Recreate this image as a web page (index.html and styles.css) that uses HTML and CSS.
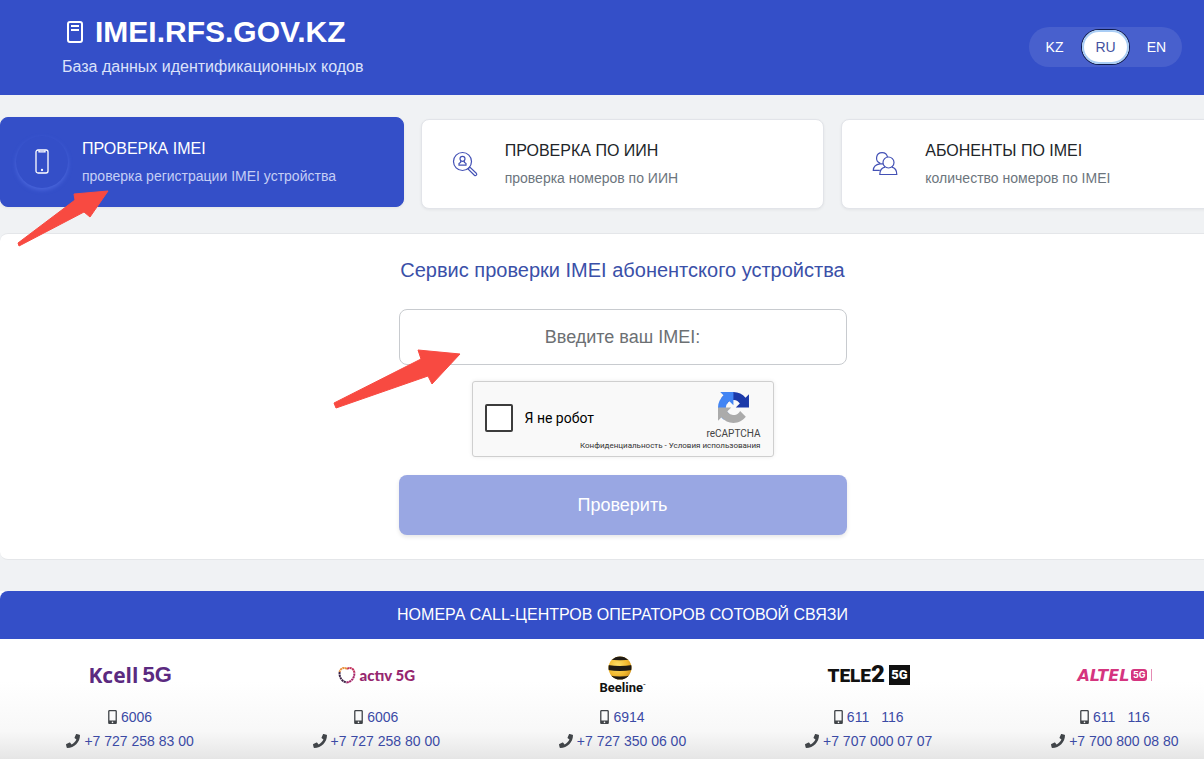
FILE: index.html
```
<!DOCTYPE html>
<html lang="ru">
<head>
  <meta charset="UTF-8">
  <title>IMEI.RFS.GOV.KZ</title>
  <meta name="viewport" content="width=device-width, initial-scale=1.0">
  <link rel="stylesheet" href="styles.css">
</head>
<body>
<svg class="sprite" aria-hidden="true">
  <symbol id="mobile" viewBox="0 0 320 512">
    <path d="M272 0H48C21.5 0 0 21.5 0 48v416c0 26.5 21.5 48 48 48h224c26.5 0 48-21.5 48-48V48c0-26.5-21.5-48-48-48zM160 480c-17.7 0-32-14.3-32-32s14.3-32 32-32 32 14.3 32 32-14.3 32-32 32zm112-108c0 6.6-5.4 12-12 12H60c-6.6 0-12-5.4-12-12V60c0-6.6 5.4-12 12-12h200c6.6 0 12 5.4 12 12v312z"/>
  </symbol>
  <symbol id="phone" viewBox="0 0 512 512">
    <path d="M493.4 24.6l-104-24c-11.3-2.6-22.9 3.3-27.5 13.9l-48 112c-4.2 9.8-1.4 21.3 6.9 28l60.6 49.6c-36 76.7-98.9 140.5-177.2 177.2l-49.6-60.6c-6.8-8.3-18.2-11.1-28-6.9l-112 48C3.9 366.5-2 378.1.6 389.4l24 104C27.1 504.2 36.7 512 48 512c256.1 0 464-207.5 464-464 0-11.2-7.7-20.9-18.6-23.4z"/>
  </symbol>
</svg>

<header class="header">
  <div class="brand">
    <h1>
      <svg class="brand-icon" viewBox="0 0 16 22" fill="none" stroke="currentColor" stroke-width="2">
        <rect x="1" y="1" width="14" height="20" rx="2"/>
        <path d="M4 5h8M4 9h8"/>
      </svg>
      IMEI.RFS.GOV.KZ
    </h1>
    <p>База данных идентификационных кодов</p>
  </div>
  <nav class="lang">
    <a href="#kz">KZ</a>
    <a href="#ru" class="active">RU</a>
    <a href="#en">EN</a>
  </nav>
</header>

<main class="page">
  <nav class="tabs">
    <a href="#imei" class="tab active">
      <span class="tab-icon">
        <svg width="14" height="26" viewBox="0 0 14 26" fill="none" stroke="currentColor" stroke-width="1.3">
          <rect x="1" y="1" width="12" height="23" rx="2"/>
          <path d="M4 1.5v1.3h6V1.5"/>
          <circle cx="7" cy="21" r=".5"/>
        </svg>
      </span>
      <span class="tab-text"><b>ПРОВЕРКА IMEI</b><small>проверка регистрации IMEI устройства</small></span>
    </a>
    <a href="#iin" class="tab">
      <span class="tab-icon">
        <svg width="26" height="26" viewBox="0 0 26 26" fill="none" stroke="currentColor" stroke-width="1.2">
          <circle cx="10.5" cy="10.5" r="9"/>
          <circle cx="10.5" cy="7.8" r="2.5"/>
          <path d="M8.7 9.5v1.7L7 12.5v1.7h7v-1.7l-1.7-1.3V9.500"/>
          <path d="M16 18l1.8-1.9 6.5 6.2c1.3 1.3-.6 3.1-1.9 1.9z"/>
        </svg>
      </span>
      <span class="tab-text"><b>ПРОВЕРКА ПО ИИН</b><small>проверка номеров по ИИН</small></span>
    </a>
    <a href="#numbers" class="tab">
      <span class="tab-icon">
        <svg width="26" height="26" viewBox="0 0 26 26" fill="none" stroke="currentColor" stroke-width="1.2">
          <path d="M15.5 6.200A5.5 5.5 0 1 0 8.300 12.300M8 12.800c-4 .5-6.5 2.700-6.700 6.500h6.500M8 12.800h3"/>
          <circle cx="16.5" cy="11.5" r="5.5"/>
          <path d="M13 16.200c-3.300.7-5.200 3.300-5.200 7.300h17c0-4-2-6.600-5-7.300"/>
        </svg>
      </span>
      <span class="tab-text"><b>АБОНЕНТЫ ПО IMEI</b><small>количество номеров по IMEI</small></span>
    </a>
  </nav>

  <section class="panel">
    <h2>Сервис проверки IMEI абонентского устройства</h2>
    <form class="form">
      <input class="imei" type="text" placeholder="Введите ваш IMEI:" aria-label="Введите ваш IMEI">
      <div class="captcha">
        <label class="robot"><input type="checkbox"> Я не робот</label>
        <div class="captcha-logo">
          <svg width="31" height="31" viewBox="0 0 64 64">
            <path fill="#1c3aa9" d="M64 31.955l-.033-1.37V4.687l-7.16 7.16C50.948 4.674 42.033.093 32.05.093c-10.4 0-19.622 4.96-25.458 12.64l11.736 11.86a15.55 15.55 0 0 1 4.754-5.334c2.05-1.6 4.952-2.906 8.968-2.906.485 0 .86.057 1.135.163 4.976.393 9.288 3.14 11.828 7.124l-8.307 8.307L64 31.953"/>
            <path fill="#4285f4" d="M31.862.094l-1.37.033H4.594l7.16 7.16C4.58 13.147 0 22.06 0 32.046c0 10.4 4.96 19.622 12.64 25.458L24.5 45.768a15.55 15.55 0 0 1-5.334-4.754c-1.6-2.05-2.906-4.952-2.906-8.968 0-.485.057-.86.163-1.135.393-4.976 3.14-9.288 7.124-11.828l8.307 8.307L31.86.095"/>
            <path fill="#ababab" d="M.001 32.045l.033 1.37v25.898l7.16-7.16c5.86 7.173 14.774 11.754 24.76 11.754 10.4 0 19.622-4.96 25.458-12.64l-11.736-11.86a15.55 15.55 0 0 1-4.754 5.334c-2.05 1.6-4.952 2.906-8.968 2.906-.485 0-.86-.057-1.135-.163-4.976-.393-9.288-3.14-11.828-7.124l8.307-8.307c-10.522.04-22.4.066-27.295-.005"/>
          </svg>
          <span>reCAPTCHA</span>
        </div>
        <p class="captcha-links"><a href="#privacy">Конфиденциальность</a> - <a href="#terms">Условия использования</a></p>
      </div>
      <button class="submit" type="button">Проверить</button>
    </form>
  </section>

  <section class="operators">
    <h3>НОМЕРА CALL-ЦЕНТРОВ ОПЕРАТОРОВ СОТОВОЙ СВЯЗИ</h3>
    <div class="operator-list">
      <div class="operator">
        <div class="logo kcell"><span>Kcell</span><b>5G</b></div>
        <p><svg class="i-mobile"><use href="#mobile"/></svg><a href="tel:6006">6006</a></p>
        <p><svg class="i-phone"><use href="#phone"/></svg><a href="tel:+77272588300">+7 727 258 83 00</a></p>
      </div>
      <div class="operator">
        <div class="logo activ">
          <svg width="18" height="18" viewBox="0 0 18 18" fill="none" stroke-width="2" stroke-dasharray="2.2 .5">
            <path stroke="#c2305c" d="M9 3c3-2.500 7-.5 7.300 3.500"/>
            <path stroke="#e8903c" d="M9 3C6 .5 2.200 2.500 1.700 6"/>
            <path stroke="#3d2347" d="M1.700 6C.8 10 3.500 15.500 8.500 16.500"/>
            <path stroke="#a52468" d="M8.500 16.500c5-.5 8.300-5 7.800-10"/>
          </svg>
          <span>actıv 5G</span>
        </div>
        <p><svg class="i-mobile"><use href="#mobile"/></svg><a href="tel:6006">6006</a></p>
        <p><svg class="i-phone"><use href="#phone"/></svg><a href="tel:+77272588000">+7 727 258 80 00</a></p>
      </div>
      <div class="operator">
        <div class="logo beeline">
          <svg width="24" height="24" viewBox="0 0 24 24">
            <defs>
              <radialGradient id="bee" cx=".4" cy=".4" r=".7">
                <stop offset="0" stop-color="#ffe169"/>
                <stop offset=".6" stop-color="#f2b82d"/>
                <stop offset="1" stop-color="#c98a16"/>
              </radialGradient>
              <clipPath id="ball"><circle cx="12" cy="12" r="11.500"/></clipPath>
            </defs>
            <g clip-path="url(#ball)">
              <rect width="24" height="24" fill="url(#bee)"/>
              <path fill="#1f1a14" d="M0 0h24v3.500Q12 5 0 3.500zM0 9q12 2 24 0v5q-12 2-24 0zM0 19q12 3 24 0v5H0z"/>
            </g>
          </svg>
          <span>Beeline<sup>™</sup></span>
        </div>
        <p><svg class="i-mobile"><use href="#mobile"/></svg><a href="tel:6914">6914</a></p>
        <p><svg class="i-phone"><use href="#phone"/></svg><a href="tel:+77273500600">+7 727 350 06 00</a></p>
      </div>
      <div class="operator">
        <div class="logo tele2"><span>TELE<big>2</big></span><b>5G</b></div>
        <p><svg class="i-mobile"><use href="#mobile"/></svg><a href="tel:611">611</a><a class="second" href="tel:116">116</a></p>
        <p><svg class="i-phone"><use href="#phone"/></svg><a href="tel:+77070000707">+7 707 000 07 07</a></p>
      </div>
      <div class="operator">
        <div class="logo altel"><span>ALTEL</span><b>5G</b></div>
        <p><svg class="i-mobile"><use href="#mobile"/></svg><a href="tel:611">611</a><a class="second" href="tel:116">116</a></p>
        <p><svg class="i-phone"><use href="#phone"/></svg><a href="tel:+77008000880">+7 700 800 08 80</a></p>
      </div>
    </div>
  </section>
</main>

<svg class="arrow arrow-tab" width="94" height="60" viewBox="0 0 94 60">
  <path d="M1 55L58 12l-1-6 34-3-18 26-6-5L2 58z"/>
</svg>
<svg class="arrow arrow-input" width="130" height="64" viewBox="0 0 130 64">
  <path d="M1 57l87-44-3-9 42 4-28 30-4-8L3 62z"/>
</svg>
</body>
</html>
```
FILE: styles.css
```
* { box-sizing: border-box; margin: 0; padding: 0; }
body {
  position: relative;
  min-height: 100vh;
  font-family: "Liberation Sans", Arial, sans-serif;
  font-size: 16px;
  background: #f0f2f4;
  color: #212529;
  overflow: hidden;
}
a { color: inherit; text-decoration: none; }
.sprite { display: none; }

.header {
  display: flex;
  align-items: center;
  justify-content: space-between;
  height: 95px;
  padding: 0 22px 2px 62px;
  background: #344fc8;
  color: #fff;
}
.brand h1 {
  display: flex;
  align-items: center;
  gap: 12px;
  padding-left: 5px;
  font-size: 30px;
  line-height: 36px;
}
.brand-icon { width: 16px; height: 22px; }
.brand p {
  margin-top: 5px;
  font-size: 16px;
  line-height: 24px;
  color: #dce2fa;
}
.lang {
  display: flex;
  align-items: center;
  gap: 4px;
  height: 40px;
  padding: 0 2px;
  border-radius: 20px;
  background: #4860cd;
  font-size: 14px;
}
.lang a {
  width: 47px;
  line-height: 34px;
  border-radius: 17px;
  text-align: center;
}
.lang .active {
  background: #fff;
  color: #4452a0;
  box-shadow: inset 0 0 0 2px #a9cdf5, 0 0 0 1px #101c4c;
}

/* the content is a bit wider than the window */
.page { margin-right: -41px; }

.tabs {
  display: grid;
  grid-template-columns: repeat(3, 1fr);
  gap: 17px;
  padding-top: 22px;
}
.tab {
  display: flex;
  align-items: center;
  height: 90px;
  margin-top: 2px;
  padding-left: 17px;
  border: 1px solid #e2e4e9;
  border-radius: 8px;
  background: #fff;
  box-shadow: 0 1px 3px rgba(0, 0, 0, 0.06);
}
.tab-icon {
  display: flex;
  align-items: center;
  justify-content: center;
  width: 52px;
  height: 52px;
  margin-right: 14px;
  border-radius: 50%;
  color: #4351b5;
}
.tab-text b {
  display: block;
  font-weight: normal;
  font-size: 16px;
  line-height: 24px;
}
.tab-text small {
  display: block;
  margin-top: 4px;
  font-size: 14px;
  line-height: 22px;
  color: #6c757d;
}
.tab.active {
  margin: 0 0 2px;
  padding-left: 15px;
  border-color: #344fc8;
  background: #344fc8;
  color: #fff;
}
.tab.active .tab-icon {
  color: #fff;
  box-shadow: 0 2px 4px #4b67dc;
  background: #344fc8;
}
.tab.active small { color: #c5cef5; }

.panel {
  margin-top: 24px;
  padding: 23px 0 24px;
  border: solid #e4e6e9;
  border-width: 1px 0;
  border-radius: 8px;
  background: #fff;
  text-align: center;
}
.panel h2 {
  font-weight: normal;
  font-size: 20px;
  line-height: 26px;
  color: #3a50a8;
}
.form {
  display: flex;
  flex-direction: column;
  align-items: center;
  width: 448px;
  margin: 26px auto 0;
}
.imei {
  width: 100%;
  height: 56px;
  border: 1px solid #c8cbcf;
  border-radius: 8px;
  font: 18px "Liberation Sans", Arial, sans-serif;
  text-align: center;
}
.imei::placeholder { color: #6c7073; }
.captcha {
  display: grid;
  grid-template-columns: 1fr auto;
  width: 302px;
  height: 76px;
  margin-top: 16px;
  padding: 10px 12px 4px;
  border: 1px solid #cfcfcf;
  border-radius: 3px;
  background: #f9f9f9;
  box-shadow: 0 0 4px rgba(0, 0, 0, 0.08);
  font-family: Roboto, sans-serif;
}
.robot {
  display: flex;
  align-items: center;
  gap: 12px;
  padding-top: 4px;
  font-size: 14px;
  color: #000;
}
.robot input {
  appearance: none;
  width: 28px;
  height: 28px;
  border: 2px solid #3c3c3c;
  border-radius: 2px;
  background: #fff;
}
.captcha-logo { color: #444; font-size: 10px; line-height: 12px; }
.captcha-logo svg { display: block; margin: 0 auto 5px; }
.captcha-links {
  grid-column: 1 / 3;
  font-size: 8px;
  line-height: 12px;
  text-align: right;
  color: #333;
}
.submit {
  width: 100%;
  height: 60px;
  margin-top: 18px;
  border: 0;
  border-radius: 8px;
  background: #99a7e3;
  box-shadow: 0 2px 4px rgba(0, 0, 0, 0.1);
  color: #fff;
  font: 18px "Liberation Sans", Arial, sans-serif;
}

.operators {
  margin-top: 31px;
  background: linear-gradient(#fff 90px, #f8f8f8 140px, #e4e4e4 170px);
}
.operators h3 {
  border-radius: 8px 8px 0 0;
  background: #344fc8;
  color: #fff;
  font-weight: normal;
  font-size: 16px;
  line-height: 48px;
  text-align: center;
}
.operator-list {
  display: grid;
  grid-template-columns: repeat(5, 1fr);
  padding: 12px 7px 6px;
}
.operator p {
  display: flex;
  align-items: center;
  justify-content: center;
  gap: 4px;
  font-size: 14px;
  line-height: 24px;
  color: #3b4aa5;
}
.operator .second { margin-left: 8px; }
.i-mobile { width: 9px; height: 14px; fill: #414549; }
.i-phone { width: 14px; height: 14px; fill: #414549; }

.logo {
  display: flex;
  align-items: center;
  justify-content: center;
  height: 48px;
  margin-bottom: 6px;
}
.kcell {
  gap: 4px;
  color: #5b2a80;
  font: bold 21px "Open Sans", sans-serif;
}
.kcell b { font: bold 22px "Liberation Sans", sans-serif; }
.activ {
  gap: 4px;
  color: #96276f;
  font: 900 15px Lato, sans-serif;
}
.beeline {
  flex-direction: column;
  color: #111;
  font: bold 13px/15px Roboto, sans-serif;
}
.beeline svg { margin-right: 4px; }
.beeline sup { font-size: 4px; line-height: 1px; }
.tele2 {
  gap: 4px;
  color: #111;
  font: 900 19px/24px Roboto, sans-serif;
}
.tele2 big { font-size: 24px; }
.tele2 b {
  width: 21px;
  background: #111;
  color: #fff;
  font-size: 13px;
  line-height: 20px;
  text-align: center;
}
.altel {
  gap: 2px;
  color: #d5357f;
  font: italic bold 16px "DejaVu Sans", sans-serif;
}
.altel b {
  width: 16px;
  border-radius: 3px;
  background: #d5357f;
  color: #fff;
  font: bold 9px/12px Inter, sans-serif;
  text-align: center;
}
.altel::after {
  content: "";
  width: 1px;
  height: 12px;
  margin-left: 2px;
  background: #e58bb4;
}

/* red pointers drawn over the content */
.arrow {
  position: absolute;
  fill: #f84a41;
  stroke: #f84a41;
  stroke-linejoin: round;
}
.arrow-tab { left: 17px; top: 188px; }
.arrow-input { left: 333px; top: 346px; }
```
